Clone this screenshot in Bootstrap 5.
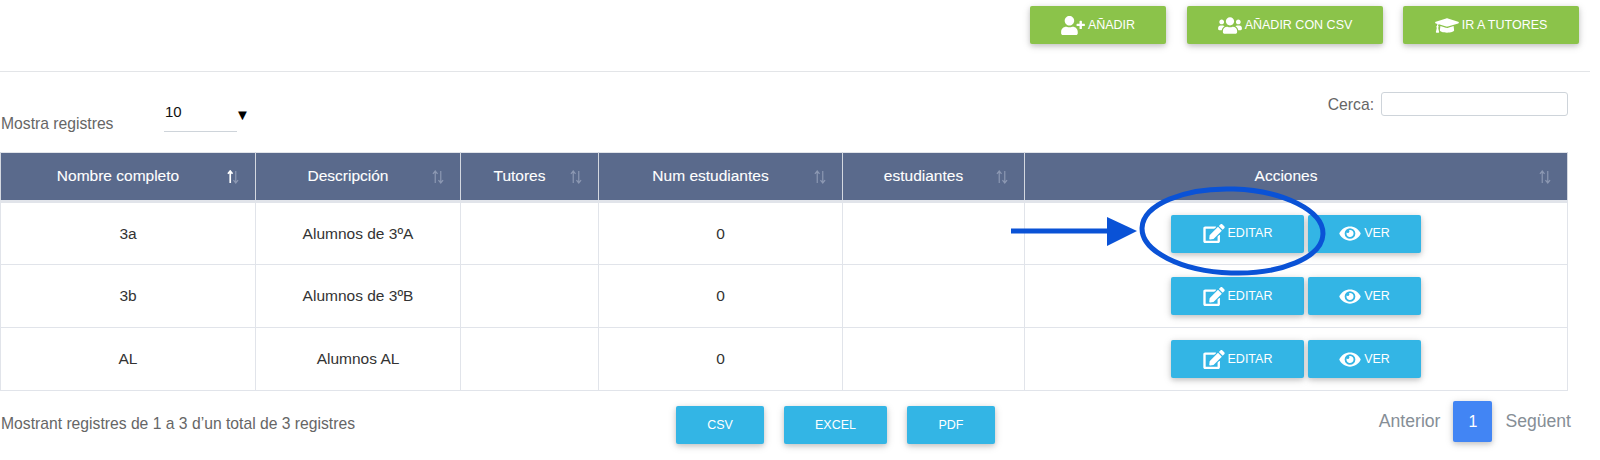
<!DOCTYPE html>
<html lang="es">
<head>
    <meta charset="UTF-8">
    <meta name="viewport" content="width=device-width, initial-scale=1.0">
    <title>Grupos</title>
    <link href="https://cdn.jsdelivr.net/npm/bootstrap@5.3.0/dist/css/bootstrap.min.css" rel="stylesheet">
    <style>
        body {
            background: #fff;
            font-family: "Liberation Sans", Arial, sans-serif;
            color: #212529;
            overflow: hidden;
        }
        .pagina {
            position: relative;
            width: 1600px;
            height: 460px;
        }
        .barra-top {
            height: 72px;
            width: 1590px;
            padding: 6px 11px 0 0;
            border-bottom: 1px solid #e3e5e8;
            gap: 20px;
        }
        .btn-md {
            height: 38px;
            border: 0;
            border-radius: 2px;
            color: #fff;
            font-size: 12.5px;
            padding: 0;
            gap: 3px;
            box-shadow: 0 2px 5px rgba(0,0,0,.16), 0 2px 10px rgba(0,0,0,.12);
        }
        .btn-md:hover { color: #fff; }
        .btn-verde { background: #8bc34a; }
        .btn-azul { background: #33b5e5; }
        .w-anadir { width: 136px; margin-right: 1px; }
        .w-csv { width: 196px; }
        .w-tutores { width: 176px; }
        .w-editar { width: 133px; }
        .w-ver { width: 113px; }
        .w-bcsv { width: 88px; }
        .w-bexcel { width: 103px; }
        .w-bpdf { width: 88px; }
        .ico { fill: #fff; flex: none; }
        .ico-24 { width: 24px; height: 19px; }
        .ico-22 { width: 22px; height: 19px; }

        .filtros {
            width: 1568px;
            height: 80px;
            color: #666;
            font-size: 15.7px;
        }
        .longitud { padding-top: 24px; width: 300px; }
        .longitud .etq { margin-top: 16px; width: 164px; padding-left: 1px; }
        .selector {
            width: 73px;
            height: 36px;
            border: 0;
            border-bottom: 1px solid #ced4da;
            border-radius: 0;
            background: none;
            padding: 4px 0 8px 1px;
            color: #111;
            font-size: 15px;
            line-height: 24px;
        }
        .flecha-sel { color: #000; font-size: 15px; margin-top: 9px; line-height: 20px; margin-left: -2px; }
        .busca { padding-top: 20px; gap: 7px; align-items: flex-start; }
        .busca label { margin-top: 1px; }
        .busca input {
            width: 187px;
            height: 24px;
            padding: 0 6px;
            border: 1px solid #ced4da;
            border-radius: 3px;
            font-size: 14px;
        }
        .tabla-grupos {
            width: 1568px;
            table-layout: fixed;
            margin: 0;
            font-size: 15.5px;
            border-color: #e1e4ea;
            --bs-table-color: #333;
        }
        .tabla-grupos th {
            background: #5a6a8c;
            color: #fff;
            font-weight: 400;
            height: 49px;
            padding: 0 20px 2px 0;
            vertical-align: middle;
            position: relative;
            border-color: #d4d8e0;
            border-bottom: 3px solid #e1e4ea;
            -webkit-text-stroke: .1px #fff;
        }
        .tabla-grupos td {
            height: 63px;
            padding: 0;
            vertical-align: middle;
        }
        .c1 { width: 255px; }
        .c2 { width: 205px; }
        .c3 { width: 138px; }
        .c4 { width: 244px; }
        .c5 { width: 182px; }
        .orden {
            position: absolute;
            right: 16px;
            top: 17px;
            width: 12px;
            height: 14px;
            fill: none;
            stroke: #8c98b2;
            stroke-width: 1.3;
        }
        .orden path.activa { stroke: #fff; stroke-width: 1.8; }
        .acciones { gap: 4px; padding-left: 146px; }
        .pie {
            width: 1590px;
            display: grid;
            grid-template-columns: 676px auto 1fr;
            padding-top: 8px;
            font-size: 15.7px;
            color: #666;
        }
        .pie-info { padding-top: 13px; padding-left: 1px; }
        .pie-btns { gap: 20px; padding-top: 7px; }
        .pie .pagination { gap: 14px; margin: 0; padding-right: 19px; align-items: center; }
        .pie .page-link {
            background: none;
            border: 0;
            color: #868e96;
            padding: 0;
            font-size: 17.6px;
        }
        .pie .page-item.active .page-link {
            background: #4285f4;
            color: #fff;
            width: 39px;
            height: 41px;
            line-height: 41px;
            text-align: center;
            border-radius: 2px;
            font-size: 16px;
            box-shadow: 0 2px 5px rgba(0,0,0,.16), 0 2px 10px rgba(0,0,0,.12);
        }
        .marca {
            position: absolute;
            left: 0;
            top: 0;
            width: 1600px;
            height: 460px;
            pointer-events: none;
        }
    </style>
</head>
<body>
<svg width="0" height="0" class="d-block position-absolute">
    <defs>
        <symbol id="i-user-plus" viewBox="0 0 640 512"><path d="M624 208h-64v-64c0-8.800-7.200-16-16-16h-32c-8.800 0-16 7.200-16 16v64h-64c-8.800 0-16 7.200-16 16v32c0 8.800 7.200 16 16 16h64v64c0 8.800 7.200 16 16 16h32c8.800 0 16-7.200 16-16v-64h64c8.800 0 16-7.200 16-16v-32c0-8.800-7.200-16-16-16zm-400 48c70.700 0 128-57.300 128-128S294.700 0 224 0 96 57.300 96 128s57.300 128 128 128zm89.600 32h-16.700c-22.200 10.200-46.900 16-72.900 16s-50.600-5.800-72.900-16h-16.700C60.200 288 0 348.200 0 422.400V464c0 26.500 21.500 48 48 48h352c26.500 0 48-21.500 48-48v-41.600c0-74.200-60.200-134.400-134.400-134.400z"/></symbol>
        <symbol id="i-users" viewBox="0 0 640 512"><path d="M96 224c35.300 0 64-28.700 64-64s-28.700-64-64-64-64 28.700-64 64 28.700 64 64 64zm448 0c35.300 0 64-28.700 64-64s-28.700-64-64-64-64 28.700-64 64 28.700 64 64 64zm32 32h-64c-17.600 0-33.500 7.100-45.100 18.600 40.300 22.100 68.900 62 75.100 109.400h66c17.700 0 32-14.300 32-32v-32c0-35.300-28.700-64-64-64zm-256 0c61.900 0 112-50.100 112-112S381.900 32 320 32 208 82.100 208 144s50.100 112 112 112zm76.800 32h-8.300c-20.800 10-43.900 16-68.500 16s-47.600-6-68.500-16h-8.300C179.600 288 128 339.600 128 403.200V432c0 26.500 21.500 48 48 48h288c26.500 0 48-21.500 48-48v-28.800c0-63.600-51.600-115.200-115.200-115.200zm-223.700-13.400C161.500 263.100 145.600 256 128 256H64c-35.300 0-64 28.700-64 64v32c0 17.700 14.300 32 32 32h65.900c6.300-47.400 34.900-87.300 75.200-109.400z"/></symbol>
        <symbol id="i-cap" viewBox="0 0 640 512"><path d="M622.340 153.200L343.400 67.500c-15.200-4.670-31.600-4.670-46.790 0L17.660 153.200c-23.540 7.230-23.540 38.360 0 45.590l48.630 14.940c-10.670 13.190-17.230 29.280-17.880 46.900C38.780 266.150 32 276.110 32 288c0 10.780 5.680 19.850 13.860 25.650L20.330 428.530C18.110 438.520 25.710 448 35.940 448h56.110c10.240 0 17.840-9.480 15.620-19.470L82.140 313.650C90.320 307.850 96 298.780 96 288c0-11.570-6.470-21.250-15.660-26.870.76-15.020 8.440-28.300 20.690-36.720L296.600 284.500c9.060 2.780 26.440 6.250 46.790 0l278.950-85.700c23.550-7.240 23.550-38.360 0-45.600zM352.790 315.090c-28.530 8.760-52.840 3.920-65.590 0l-145.020-44.550L128 384c0 35.350 85.960 64 192 64s192-28.650 192-64l-14.180-113.470-145.030 44.560z"/></symbol>
        <symbol id="i-edit" viewBox="0 0 576 512"><path d="M402.600 83.200l90.200 90.200c3.800 3.800 3.800 10 0 13.800L274.400 405.600l-92.800 10.300c-12.400 1.400-22.900-9.100-21.500-21.500l10.300-92.800L388.800 83.200c3.800-3.800 10-3.800 13.800 0zm162-22.900l-48.800-48.800c-15.200-15.200-39.900-15.200-55.200 0l-35.400 35.400c-3.800 3.800-3.800 10 0 13.800l90.200 90.200c3.800 3.800 10 3.800 13.800 0l35.400-35.400c15.200-15.300 15.200-40 0-55.200zM384 346.200V448H64V128h229.800c3.200 0 6.200-1.300 8.500-3.500l40-40c7.600-7.600 2.200-20.500-8.500-20.500H48C21.500 64 0 85.500 0 112v352c0 26.500 21.500 48 48 48h352c26.500 0 48-21.500 48-48V306.200c0-10.700-12.900-16-20.500-8.500l-40 40c-2.200 2.300-3.500 5.300-3.500 8.500z"/></symbol>
        <symbol id="i-eye" viewBox="0 0 576 512"><path d="M572.520 241.400C518.290 135.590 410.930 64 288 64S57.680 135.640 3.480 241.410a32.350 32.350 0 0 0 0 29.190C57.710 376.410 165.070 448 288 448s230.320-71.640 284.520-177.410a32.350 32.350 0 0 0 0-29.190zM288 400a144 144 0 1 1 144-144 143.930 143.930 0 0 1-144 144zm0-240a95.310 95.310 0 0 0-25.310 3.790 47.850 47.850 0 0 1-66.900 66.900A95.780 95.780 0 1 0 288 160z"/></symbol>
    </defs>
</svg>

<div class="pagina">
    <div class="barra-top d-flex justify-content-end align-items-start">
        <a href="#" class="btn btn-md btn-verde w-anadir d-flex align-items-center justify-content-center"><svg class="ico ico-24"><use href="#i-user-plus"/></svg>AÑADIR</a>
        <a href="#" class="btn btn-md btn-verde w-csv d-flex align-items-center justify-content-center"><svg class="ico ico-24"><use href="#i-users"/></svg>AÑADIR CON CSV</a>
        <a href="#" class="btn btn-md btn-verde w-tutores d-flex align-items-center justify-content-center"><svg class="ico ico-24"><use href="#i-cap"/></svg>IR A TUTORES</a>
    </div>

    <div class="filtros d-flex justify-content-between">
        <div class="longitud d-flex align-items-start">
            <span class="etq">Mostra registres</span>
            <select class="selector form-select">
                <option>10</option>
            </select>
            <span class="flecha-sel">▼</span>
        </div>
        <div class="busca d-flex">
            <label for="cerca">Cerca:</label>
            <input type="search" id="cerca" class="form-control">
        </div>
    </div>

    <table class="table table-bordered text-center tabla-grupos">
        <thead>
            <tr>
                <th class="c1">Nombre completo<svg class="orden" viewBox="0 0 13 15"><path class="activa" d="M3.500 14V1.500M1 4l2.500-3L6 4"/><path d="M9.500 1v12.500M7 11l2.500 3 2.500-3"/></svg></th>
                <th class="c2">Descripción<svg class="orden" viewBox="0 0 13 15"><path d="M3.500 14V1.500M1 4l2.500-3L6 4M9.500 1v12.500M7 11l2.500 3 2.500-3"/></svg></th>
                <th class="c3">Tutores<svg class="orden" viewBox="0 0 13 15"><path d="M3.500 14V1.500M1 4l2.500-3L6 4M9.500 1v12.500M7 11l2.500 3 2.500-3"/></svg></th>
                <th class="c4">Num estudiantes<svg class="orden" viewBox="0 0 13 15"><path d="M3.500 14V1.500M1 4l2.500-3L6 4M9.500 1v12.500M7 11l2.500 3 2.500-3"/></svg></th>
                <th class="c5">estudiantes<svg class="orden" viewBox="0 0 13 15"><path d="M3.500 14V1.500M1 4l2.500-3L6 4M9.500 1v12.500M7 11l2.500 3 2.500-3"/></svg></th>
                <th>Acciones<svg class="orden" viewBox="0 0 13 15"><path d="M3.500 14V1.500M1 4l2.500-3L6 4M9.500 1v12.500M7 11l2.500 3 2.500-3"/></svg></th>
            </tr>
        </thead>
        <tbody>
            <tr>
                <td>3a</td>
                <td>Alumnos de 3ºA</td>
                <td></td>
                <td>0</td>
                <td></td>
                <td>
                    <div class="acciones d-flex">
                        <a href="#" class="btn btn-md btn-azul w-editar d-flex align-items-center justify-content-center"><svg class="ico ico-22"><use href="#i-edit"/></svg>EDITAR</a>
                        <a href="#" class="btn btn-md btn-azul w-ver d-flex align-items-center justify-content-center"><svg class="ico ico-22"><use href="#i-eye"/></svg>VER</a>
                    </div>
                </td>
            </tr>
            <tr>
                <td>3b</td>
                <td>Alumnos de 3ºB</td>
                <td></td>
                <td>0</td>
                <td></td>
                <td>
                    <div class="acciones d-flex">
                        <a href="#" class="btn btn-md btn-azul w-editar d-flex align-items-center justify-content-center"><svg class="ico ico-22"><use href="#i-edit"/></svg>EDITAR</a>
                        <a href="#" class="btn btn-md btn-azul w-ver d-flex align-items-center justify-content-center"><svg class="ico ico-22"><use href="#i-eye"/></svg>VER</a>
                    </div>
                </td>
            </tr>
            <tr>
                <td>AL</td>
                <td>Alumnos AL</td>
                <td></td>
                <td>0</td>
                <td></td>
                <td>
                    <div class="acciones d-flex">
                        <a href="#" class="btn btn-md btn-azul w-editar d-flex align-items-center justify-content-center"><svg class="ico ico-22"><use href="#i-edit"/></svg>EDITAR</a>
                        <a href="#" class="btn btn-md btn-azul w-ver d-flex align-items-center justify-content-center"><svg class="ico ico-22"><use href="#i-eye"/></svg>VER</a>
                    </div>
                </td>
            </tr>
        </tbody>
    </table>

    <div class="pie">
        <div class="pie-info">Mostrant registres de 1 a 3 d’un total de 3 registres</div>
        <div class="pie-btns d-flex">
            <a href="#" class="btn btn-md btn-azul w-bcsv d-flex align-items-center justify-content-center">CSV</a>
            <a href="#" class="btn btn-md btn-azul w-bexcel d-flex align-items-center justify-content-center">EXCEL</a>
            <a href="#" class="btn btn-md btn-azul w-bpdf d-flex align-items-center justify-content-center">PDF</a>
        </div>
        <ul class="pagination justify-content-end">
            <li class="page-item"><a class="page-link" href="#">Anterior</a></li>
            <li class="page-item active"><a class="page-link" href="#">1</a></li>
            <li class="page-item"><a class="page-link" href="#">Següent</a></li>
        </ul>
    </div>

    <svg class="marca" viewBox="0 0 1600 460">
        <ellipse cx="1232.500" cy="231" rx="90.500" ry="42" transform="rotate(2 1232.500 231)" fill="none" stroke="#0a52d6" stroke-width="5"/>
        <rect x="1011" y="228.500" width="97" height="5" fill="#0a52d6"/>
        <polygon points="1107,217 1137,231 1107,246" fill="#0a52d6"/>
    </svg>
</div>

<script src="https://cdn.jsdelivr.net/npm/bootstrap@5.3.0/dist/js/bootstrap.bundle.min.js"></script>
</body>
</html>
